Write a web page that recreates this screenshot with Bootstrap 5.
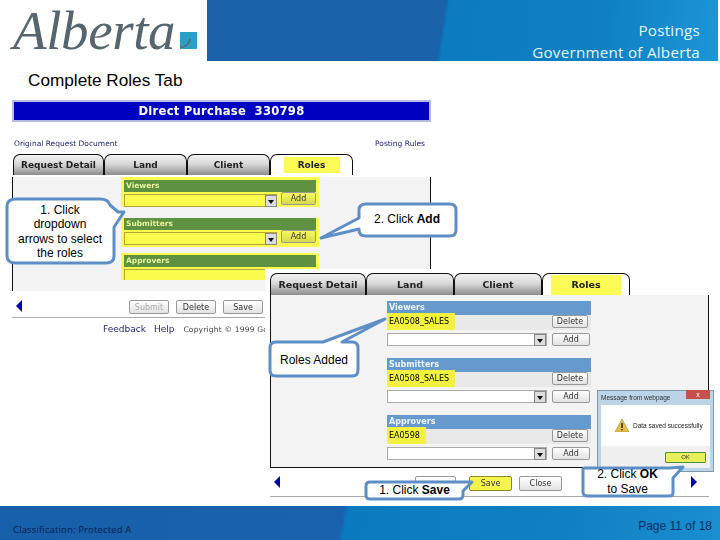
<!DOCTYPE html>
<html lang="en">
<head>
<meta charset="UTF-8">
<title>Complete Roles Tab</title>
<link href="https://cdn.jsdelivr.net/npm/bootstrap@5.3.0/dist/css/bootstrap.min.css" rel="stylesheet">
<style>
    html, body { margin: 0; height: 540px; overflow: hidden; background: #fff; }
    .slide { width: 720px; height: 540px; font-family: "Liberation Sans", Arial, sans-serif; color: #000; }

    .top-bar { height: 61px; }
    .logo-box { width: 207px; position: relative; }
    .logo-word { position: absolute; left: 13px; top: 0; height: 61px; font-family: "Liberation Serif", serif; font-style: italic; color: #56666e; line-height: 61px; white-space: nowrap; font-size: 55px; letter-spacing: -.4px; }
    .logo-square { position: absolute; left: 180px; top: 32px; width: 17px; height: 17px; }

    .top-blue { width: 511px; margin-right: 2px; padding: 19px 18px 0 0; text-align: right; color: #e4f4fa; font-family: "Open Sans", sans-serif; font-size: 15.2px; line-height: 22px; letter-spacing: .25px;
        background: linear-gradient(99deg, #1b62aa 0, #1a62aa 236px, #0c7bbf 240px, #0f80c4 400px, #1b96d6 511px); }

    .stage { position: relative; }
    .slide-title { position: absolute; left: 28px; top: 9px; font-size: 17.2px; line-height: 20px; }

    .shot-one { position: absolute; left: 12px; top: 39px; width: 419px; filter: blur(.3px); }
    .shot-two { position: absolute; left: 265px; top: 208px; width: 451px; height: 231px; background: #fff; padding: 4px 0 0 5px; filter: blur(.3px); }

    .po-bar { height: 22px; background: #0000c0; border: 2px solid #b9b9e6; color: #fff; font-family: "DejaVu Sans", sans-serif; font-weight: 700; font-size: 11.6px; line-height: 18px; text-align: center; letter-spacing: .25px; white-space: pre; }
    .link-row { height: 32px; padding: 0 6px 5px 2px; font-family: "DejaVu Sans", sans-serif; font-size: 7.5px; color: #1d1d78; }

    .tab-row { font-family: "DejaVu Sans", sans-serif; font-weight: 700; color: #222; }
    .tab-one { height: 21px; font-size: 9px; padding-left: 1px; }
    .tab-two { height: 22px; font-size: 9.5px; }
    .tab-item { border: 1px solid #111; border-bottom: 0; border-radius: 7px 7px 0 0; background: linear-gradient(#f2f2f2, #d8d8d8 45%, #8c8c8c); line-height: 1; }
    .tab-one .tab-item { width: 83px; }
    .tab-one .tab-first { width: 91px; }
    .tab-two .tab-item { width: 88px; }
    .tab-two .tab-first { width: 96px; }
    .tab-on { background: #fff; }
    .tab-mark { background: #fbfb55; width: 56px; height: 16px; line-height: 16px; text-align: center; }
    .tab-two .tab-mark { width: 70px; height: 20px; line-height: 20px; }

    .panel-one { height: 114px; background: #f3f3f3; border-left: 1px solid #111; border-right: 1px solid #111; padding-left: 108px; }
    .panel-two { height: 173px; width: 439px; background: #f3f3f3; border: 1px solid #111; border-top: 0; padding: 6px 0 0 116px; }

    .role-yellow { width: 198px; background: #fbfb4e; padding: 3px; }
    .yellow-a { height: 30px; margin-top: 2px; }
    .yellow-b { height: 29px; margin-top: 11px; padding-top: 0; }
    .yellow-c { height: 27px; margin-top: 6px; padding-top: 2px; overflow: hidden; }
    .green-head { height: 12px; background: #5f9142; color: #e9f59a; font-family: "DejaVu Sans", sans-serif; font-weight: 700; font-size: 7.5px; line-height: 12px; padding-left: 2px; }
    .pick-line { height: 13px; margin-top: 2px; border: 1px solid #b2a838; border-right: 0; }
    .drop-arrow { width: 12px; height: 12px; background: #ddd; border: 1px solid #888; position: relative; flex: none; }
    .drop-arrow::after { content: ""; position: absolute; left: 2px; top: 4px; border: 3px solid transparent; border-top: 4px solid #111; border-bottom: 0; }
    .old-btn { font-family: "DejaVu Sans", sans-serif; font-size: 8px; line-height: 11px; padding: 0; color: #333; background: linear-gradient(#fff, #e2e2e2); border: 1px solid #999; border-radius: 2px; }
    .add-yellow { width: 35px; height: 13px; margin-left: 4px; background: linear-gradient(#f8f860, #d8d850); flex: none; }

    .foot-one { height: 27px; padding: 9px 0 0 4px; border-bottom: 1px solid #aaa; width: 253px; }
    .arrow-left { width: 0; height: 0; border: 6px solid transparent; border-left: 0; border-right: 6px solid #0000b0; flex: none; }
    .arrow-right { width: 0; height: 0; border: 6px solid transparent; border-right: 0; border-left: 6px solid #0000b0; flex: none; }
    .foot-btn { width: 40px; height: 14px; }
    .btn-off { color: #aaa; margin-left: 107px; }
    .btn-mid { margin-left: 7px; }
    .foot-links { padding: 4px 0 0 91px; width: 253px; height: 20px; white-space: nowrap; font-family: "DejaVu Sans", sans-serif; color: #27277f; font-size: 9px; line-height: 14px; }
    .foot-help { margin-left: 8px; }
    .foot-copy { font-size: 7.5px; color: #444; margin-left: 9px; letter-spacing: .2px; }

    .blue-head { height: 14px; background: #6699cc; color: #eef4fa; font-family: "DejaVu Sans", sans-serif; font-weight: 700; font-size: 8px; line-height: 14px; padding-left: 2px; }
    .role-block { width: 204px; margin-bottom: 12px; }
    .picked-row { height: 15px; background: #e9e9e9; font-family: "DejaVu Sans", sans-serif; font-size: 8px; line-height: 15px; }
    .picked-mark { background: #f2f23e; padding: 0 6px 0 2px; height: 17px; margin-top: -2px; line-height: 18px; }
    .small-btn { width: 36px; height: 13px; margin-right: 3px; }
    .white-line { height: 13px; margin-top: 3px; }
    .white-input { background: #fff; border: 1px solid #aaa; width: 160px; }
    .add-grey { width: 38px; height: 13px; margin-left: 5px; margin-right: 1px; }

    .foot-two { height: 29px; width: 439px; padding: 8px 12px 0 4px; border-bottom: 1px solid #aaa; }
    .btn-hidden { width: 41px; height: 14px; margin-left: 135px; }
    .btn-save { width: 43px; height: 15px; margin-left: 13px; background: #f4f44c; border-color: #8a8a20; }
    .btn-close-old { width: 43px; height: 15px; margin-left: 7px; }

    .msg-box { position: absolute; left: 332px; top: 121px; width: 117px; height: 82px; background: #bcd4e8; border: 1px solid #7f99ae; padding: 0 3px 3px; font-family: "Liberation Sans", sans-serif; font-size: 6.5px; }
    .msg-title { height: 14px; line-height: 14px; color: #333; }
    .msg-x { width: 24px; height: 9px; margin-top: -1px; background: #c8504a; color: #fff; font-size: 7px; line-height: 9px; text-align: center; }
    .msg-body { height: 41px; background: #fff; padding: 0 0 0 14px; color: #222; }
    .msg-foot { height: 22px; background: #f0f0f0; padding-right: 4px; }
    .ok-btn { width: 41px; height: 11px; background: #e9ef5a; border: 1px solid #4f8f3a; border-radius: 1px; font-size: 6px; line-height: 9px; padding: 0; color: #333; }

    .call-art { position: absolute; left: 0; top: 0; width: 720px; height: 445px; overflow: visible; pointer-events: none; }
    .call-art path { fill: #fff; stroke: #5d8fc6; stroke-width: 3; stroke-linejoin: round; }
    .call-text { position: absolute; font-size: 12px; line-height: 14.3px; text-align: center; }
    .call-one { left: 14px; top: 142px; width: 92px; }
    .call-two { left: 358px; top: 151px; width: 98px; }
    .call-roles { left: 270px; top: 292px; width: 88px; }
    .call-save { left: 365px; top: 422px; width: 99px; }
    .call-ok { left: 584px; top: 406px; width: 87px; line-height: 15px; }

    .bottom-bar { height: 34px; padding: 0 8px 0 13px; background: linear-gradient(101deg, #175fa9 0, #1a62ab 338px, #0c7abf 343px, #1180c3 560px, #1b8fd0 720px); }
    .class-note { font-family: "Open Sans", sans-serif; font-size: 9.5px; line-height: 13px; color: #04204e; padding-top: 17px; letter-spacing: .15px; }
    .page-note { font-size: 12px; line-height: 14px; color: #0a2f66; padding-top: 13px; }
</style>
</head>
<body>
<div class="slide d-flex flex-column">

    <div class="top-bar d-flex">
        <div class="logo-box">
            <div class="logo-word">Alberta</div>
            <svg class="logo-square" viewBox="0 0 17 17"><rect width="17" height="17" fill="#2c9fc4"/><path d="M0 15C5 16 9 12 10 7" fill="none" stroke="#56666e" stroke-width="1.4"/></svg>
        </div>
        <div class="top-blue flex-grow-1">Postings<br>Government of Alberta</div>
    </div>

    <div class="stage flex-grow-1">
        <div class="slide-title">Complete Roles Tab</div>

        <!-- first screenshot -->
        <div class="shot-one">
            <div class="po-bar">Direct Purchase  330798</div>
            <div class="link-row d-flex justify-content-between align-items-end">
                <span>Original Request Document</span><span>Posting Rules</span>
            </div>
            <div class="tab-row tab-one d-flex">
                <div class="tab-item tab-first d-flex align-items-center justify-content-center">Request Detail</div>
                <div class="tab-item d-flex align-items-center justify-content-center">Land</div>
                <div class="tab-item d-flex align-items-center justify-content-center">Client</div>
                <div class="tab-item tab-on d-flex align-items-center justify-content-center"><div class="tab-mark">Roles</div></div>
            </div>
            <div class="panel-one">
                <div class="role-yellow yellow-a">
                    <div class="green-head">Viewers</div>
                    <div class="d-flex">
                        <div class="pick-line flex-grow-1 d-flex justify-content-end"><div class="drop-arrow"></div></div>
                        <button class="btn old-btn add-yellow" type="button">Add</button>
                    </div>
                </div>
                <div class="role-yellow yellow-b">
                    <div class="green-head">Submitters</div>
                    <div class="d-flex">
                        <div class="pick-line flex-grow-1 d-flex justify-content-end"><div class="drop-arrow"></div></div>
                        <button class="btn old-btn add-yellow" type="button">Add</button>
                    </div>
                </div>
                <div class="role-yellow yellow-c">
                    <div class="green-head">Approvers</div>
                    <div class="pick-line"></div>
                </div>
            </div>
            <div class="foot-one d-flex align-items-start">
                <div class="arrow-left"></div>
                <button class="btn old-btn foot-btn btn-off" type="button">Submit</button>
                <button class="btn old-btn foot-btn btn-mid" type="button">Delete</button>
                <button class="btn old-btn foot-btn btn-mid" type="button">Save</button>
            </div>
            <div class="foot-links">Feedback<span class="foot-help">Help</span><span class="foot-copy">Copyright © 1999 Go</span></div>
        </div>

        <!-- second screenshot, laid over the first -->
        <div class="shot-two">
            <div class="tab-row tab-two d-flex">
                <div class="tab-item tab-first d-flex align-items-center justify-content-center">Request Detail</div>
                <div class="tab-item d-flex align-items-center justify-content-center">Land</div>
                <div class="tab-item d-flex align-items-center justify-content-center">Client</div>
                <div class="tab-item tab-on d-flex align-items-center justify-content-center"><div class="tab-mark">Roles</div></div>
            </div>
            <div class="panel-two">
                <div class="role-block">
                    <div class="blue-head">Viewers</div>
                    <div class="picked-row d-flex justify-content-between">
                        <span class="picked-mark">EA0508_SALES</span>
                        <button class="btn old-btn small-btn" type="button">Delete</button>
                    </div>
                    <div class="white-line d-flex">
                        <div class="white-input d-flex justify-content-end"><div class="drop-arrow"></div></div>
                        <button class="btn old-btn add-grey" type="button">Add</button>
                    </div>
                </div>
                <div class="role-block">
                    <div class="blue-head">Submitters</div>
                    <div class="picked-row d-flex justify-content-between">
                        <span class="picked-mark">EA0508_SALES</span>
                        <button class="btn old-btn small-btn" type="button">Delete</button>
                    </div>
                    <div class="white-line d-flex">
                        <div class="white-input d-flex justify-content-end"><div class="drop-arrow"></div></div>
                        <button class="btn old-btn add-grey" type="button">Add</button>
                    </div>
                </div>
                <div class="role-block">
                    <div class="blue-head">Approvers</div>
                    <div class="picked-row d-flex justify-content-between">
                        <span class="picked-mark">EA0598</span>
                        <button class="btn old-btn small-btn" type="button">Delete</button>
                    </div>
                    <div class="white-line d-flex">
                        <div class="white-input d-flex justify-content-end"><div class="drop-arrow"></div></div>
                        <button class="btn old-btn add-grey" type="button">Add</button>
                    </div>
                </div>
            </div>
            <div class="foot-two d-flex align-items-start">
                <div class="arrow-left"></div>
                <button class="btn old-btn btn-hidden" type="button"></button>
                <button class="btn old-btn btn-save" type="button">Save</button>
                <button class="btn old-btn btn-close-old" type="button">Close</button>
                <div class="arrow-right ms-auto"></div>
            </div>

            <div class="msg-box">
                <div class="msg-title d-flex justify-content-between"><span>Message from webpage</span><div class="msg-x">x</div></div>
                <div class="msg-body d-flex align-items-center gap-1">
                    <svg width="14" height="13" viewBox="0 0 14 13"><path d="M7 0 14 13H0Z" fill="#e2c04a" stroke="#a88a20" stroke-width=".6"/><rect x="6.3" y="4" width="1.4" height="5" fill="#222"/><rect x="6.3" y="10" width="1.4" height="1.4" fill="#222"/></svg>
                    <span>Data saved successfully</span>
                </div>
                <div class="msg-foot d-flex align-items-center justify-content-end"><button class="btn ok-btn" type="button">OK</button></div>
            </div>
        </div>

        <!-- callouts -->
        <svg class="call-art" viewBox="0 0 720 445">
            <path d="M16 138H100Q108 138 110 144L118 151 124 151 114 166V195Q114 202 106 202H16Q7 202 7 195V145Q7 138 16 138Z"/>
            <path d="M366 143H450Q456 143 456 149V169Q456 175 450 175H366Q359 175 359 169V168L321 177 359 157V149Q359 143 366 143Z"/>
            <path d="M276 281H323L385 258 342 281H352Q358 281 358 287V309Q358 315 352 315H276Q270 315 270 309V287Q270 281 276 281Z"/>
            <path d="M370 421H460L472 421 463 430V434Q463 438 459 438H370Q366 438 366 434V425Q366 421 370 421Z"/>
            <path d="M584 407H670L683 406 673 417V432Q673 435 669 435H588Q583 435 583 431V408Z"/>
        </svg>
        <div class="call-text call-one">1. Click dropdown arrows to select the roles</div>
        <div class="call-text call-two">2. Click <b>Add</b></div>
        <div class="call-text call-roles">Roles Added</div>
        <div class="call-text call-save">1. Click <b>Save</b></div>
        <div class="call-text call-ok">2. Click <b>OK</b><br>to Save</div>
    </div>

    <div class="bottom-bar d-flex justify-content-between">
        <div class="class-note">Classification: Protected A</div>
        <div class="page-note">Page 11 of 18</div>
    </div>
</div>
<script src="https://cdn.jsdelivr.net/npm/bootstrap@5.3.0/dist/js/bootstrap.bundle.min.js"></script>
</body>
</html>
